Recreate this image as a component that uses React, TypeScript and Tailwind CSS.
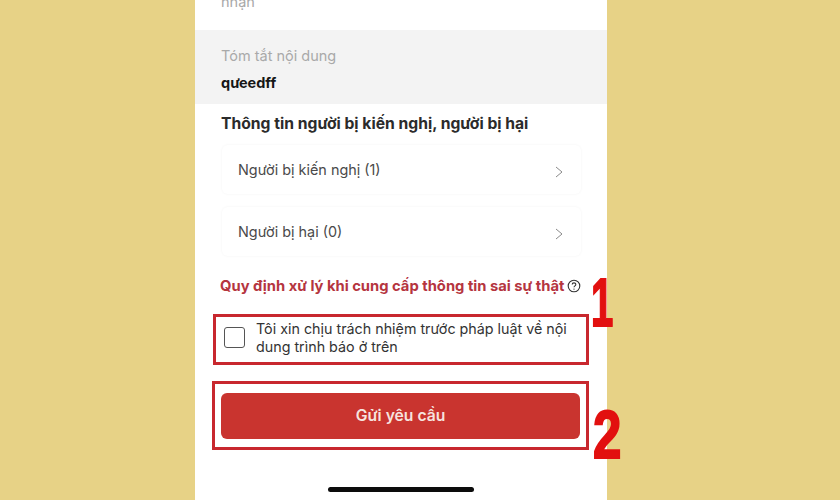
import React from 'react';

const font = { fontFamily: 'Inter, "Noto Sans", sans-serif' };

const Row = ({ label }: { label: string }) => (
  <div className="ml-[27px] mr-[26px] flex h-[49px] items-center justify-between rounded-md pl-[16px] pr-[18px] shadow-[0_0_3px_rgba(0,0,0,0.05)]">
    <span className="text-[14.4px] text-[#4a4a4a]">{label}</span>
    <svg width="8" height="12" viewBox="0 0 8 12" fill="none" className="mt-1">
      <path d="M1 1l6 5-6 5" stroke="#8a8a8a" strokeWidth="1" />
    </svg>
  </div>
);

const App: React.FC = () => {
  return (
    <div className="relative h-[500px] w-[840px] overflow-hidden bg-[#e7d286]" style={font}>
      <div className="ml-[195px] flex h-[500px] w-[412px] flex-col bg-white">
        <div className="flex h-[30px] items-start overflow-hidden pl-[26px]">
          <span className="mt-[-7px] text-[14.5px] leading-[18px] text-[#a8a8a8]">nhận</span>
        </div>
        <div className="flex h-[74px] flex-col bg-[#f3f3f3] pl-[26px] pt-[17px]">
          <span className="text-[14.5px] leading-[18px] text-[#a9a9a9]">Tóm tắt nội dung</span>
          <span className="mt-[9px] text-[14.5px] font-bold leading-[18px] text-[#161616]">qưeedff</span>
        </div>
        <div className="mt-[10px] pl-[26px] text-[15.7px] font-bold leading-5 text-[#2b2b2b]">
          Thông tin người bị kiến nghị, người bị hại
        </div>
        <div className="mt-[11px] flex flex-col gap-[13px]">
          <Row label="Người bị kiến nghị (1)" />
          <Row label="Người bị hại (0)" />
        </div>
        <div className="mt-[20px] flex items-center pl-[25px] text-[14.75px] font-bold leading-5 text-[#b5353f]">
          <span>Quy định xử lý khi cung cấp thông tin sai sự thật</span>
          <svg width="14" height="14" viewBox="0 0 14 14" fill="none" className="ml-[3px]">
            <circle cx="7" cy="7" r="5.8" stroke="#333" strokeWidth="1.1" />
            <path d="M5.2 5.6c0-2.3 3.6-2.3 3.6-.1 0 1.4-1.8 1.3-1.8 2.8" stroke="#333" strokeWidth="1.1" fill="none" />
            <circle cx="7" cy="10.1" r=".7" fill="#333" />
          </svg>
        </div>
        <div className="ml-[18px] mt-[18px] flex h-[51px] w-[376px] items-center border-[3px] border-[#c8282e] pb-[4px] pl-[8px]">
          <div className="h-[21px] w-[21px] shrink-0 rounded-[3px] border-[1.5px] border-[#555]" />
          <p className="ml-[11px] text-[14.3px] leading-[18px] text-[#333]">
            Tôi xin chịu trách nhiệm trước pháp luật về nội dung trình báo ở trên
          </p>
        </div>
        <div className="ml-[17px] mt-[16px] flex h-[69px] w-[377px] items-center justify-center border-[3px] border-[#c8282e]">
          <button className="h-[46px] w-[359px] rounded-md bg-[#c9342f] pt-[1px] text-[15.7px] font-semibold text-[#f6e3df]">
            Gửi yêu cầu
          </button>
        </div>
        <div className="ml-[133px] mt-[37px] h-[5px] w-[146px] rounded-full bg-[#0c0c0c]" />
      </div>
      <span
        className="absolute left-[591px] top-[267px] origin-left scale-x-[0.58] text-[69px] font-black leading-[72px] text-[#e2100f] [-webkit-text-stroke:2px_#e2100f]"
        style={{ fontFamily: '"Liberation Sans", sans-serif' }}
      >
        1
      </span>
      <span
        className="absolute left-[593px] top-[399px] origin-left scale-x-[0.74] text-[69px] font-black leading-[72px] text-[#e2100f] [-webkit-text-stroke:2px_#e2100f]"
        style={{ fontFamily: '"Liberation Sans", sans-serif' }}
      >
        2
      </span>
    </div>
  );
};

export default App;
